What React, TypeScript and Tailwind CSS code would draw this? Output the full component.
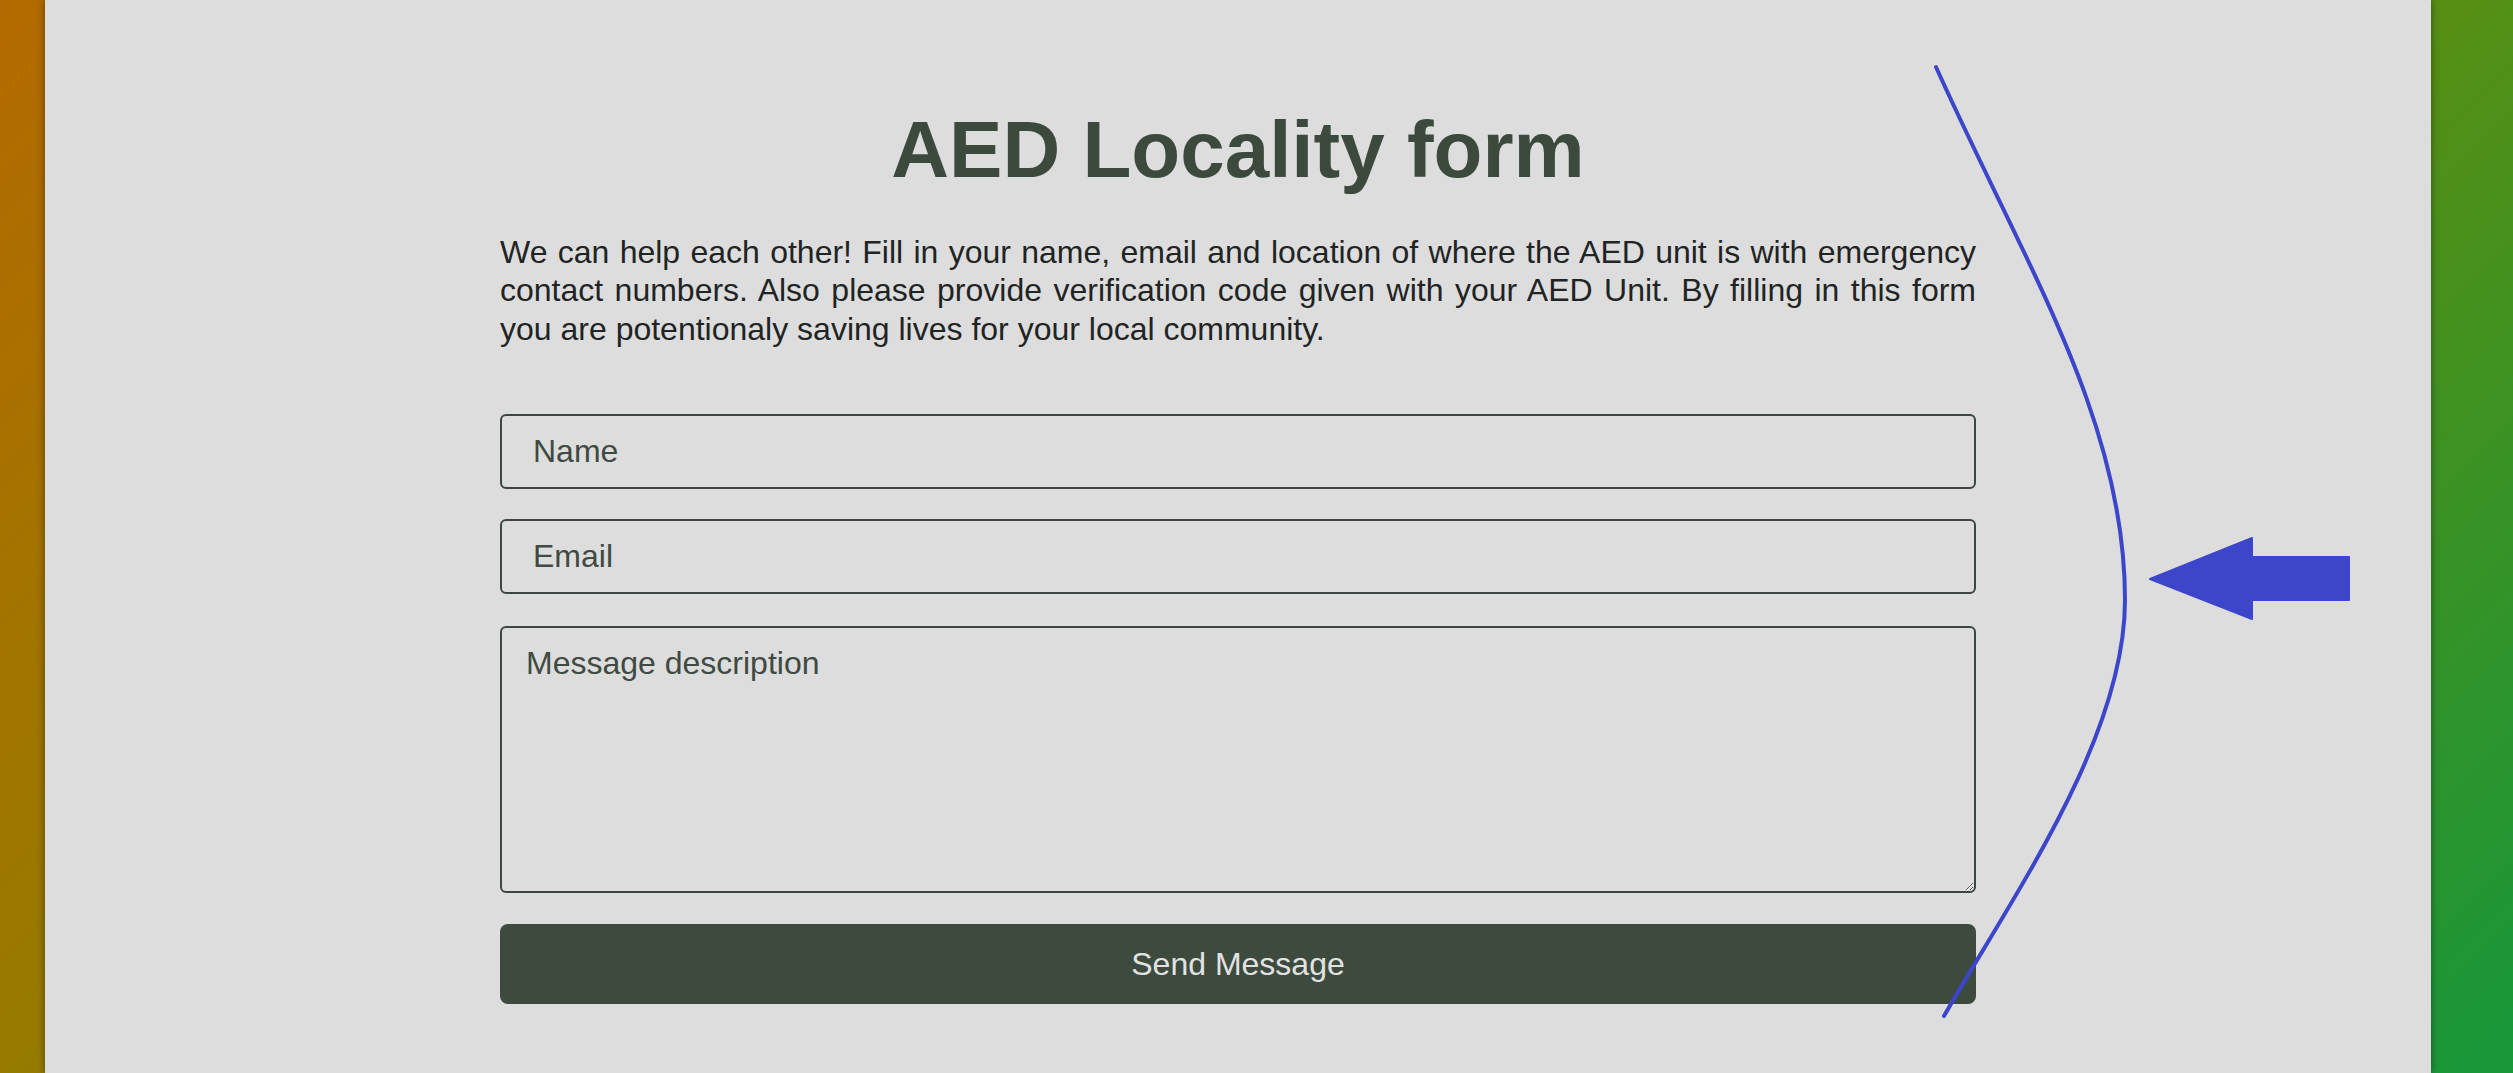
import React from "react";

export default function App() {
  return (
    <div className="relative min-h-screen pl-[45px] pr-[82px] bg-[linear-gradient(135deg,#b46a00_0%,#977a00_30%,#568f14_69%,#199739_99%)] font-['Liberation_Sans',Arial,sans-serif]">
      <div className="min-h-screen bg-[#dddddd] shadow-[0_0_8px_rgba(0,0,0,0.45)] flex flex-col items-center pt-[104px] pb-[40px]">
        <h1 className="text-[80px] leading-[92px] font-bold text-[#3b4a3d] text-center">
          AED Locality form
        </h1>
        <div className="w-[1476px] flex flex-col">
          <p className="mt-[37px] text-[32px] leading-[38.4px] text-justify text-[#1f2424]">
            We can help each other! Fill in your name, email and location of where the AED unit is with emergency
            contact numbers. Also please provide verification code given with your AED Unit. By filling in this form
            you are potentionaly saving lives for your local community.
          </p>
          <form className="mt-[66px] flex flex-col" onSubmit={(e) => e.preventDefault()}>
            <input
              type="text"
              placeholder="Name"
              className="w-full h-[75px] border-2 border-[#3d463f] rounded-[6px] bg-transparent px-[31px] text-[32px] text-[#3f4a42] placeholder:text-[#3f4a42] outline-none"
            />
            <input
              type="email"
              placeholder="Email"
              className="mt-[30px] w-full h-[75px] border-2 border-[#3d463f] rounded-[6px] bg-transparent px-[31px] text-[32px] text-[#3f4a42] placeholder:text-[#3f4a42] outline-none"
            />
            <textarea
              placeholder="Message description"
              className="mt-[32px] w-full h-[267px] border-2 border-[#3d463f] rounded-[6px] bg-transparent px-[24px] pt-[17px] text-[32px] leading-[36.8px] text-[#3f4a42] placeholder:text-[#3f4a42] outline-none"
            />
            <button
              type="submit"
              className="mt-[31px] w-full h-[80px] rounded-[8px] bg-[#3d4a3e] text-[32px] text-[#e2e2e2]"
            >
              Send Message
            </button>
          </form>
        </div>
      </div>
      <svg
        className="absolute left-0 top-0 pointer-events-none"
        width="2513"
        height="1073"
        viewBox="0 0 2513 1073"
        fill="none"
      >
        <path
          d="M1936 67 C2026 267 2125 420 2125 600 C2125 740 2010 900 1944 1016"
          stroke="#3d46cb"
          strokeWidth="4"
          strokeLinecap="round"
        />
        <path
          d="M2150 579 L2252 538 L2252 557 L2349 557 L2349 600 L2252 600 L2252 619 Z"
          fill="#3d46cb"
          stroke="#3d46cb"
          strokeWidth="2"
          strokeLinejoin="round"
        />
      </svg>
    </div>
  );
}
